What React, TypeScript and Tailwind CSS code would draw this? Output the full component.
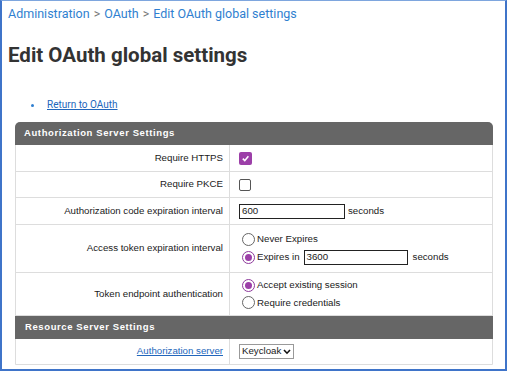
import React from "react";

function Radio({ checked }: { checked?: boolean }) {
  return (
    <span
      className={`inline-block w-[13px] h-[13px] rounded-full border shrink-0 ${
        checked ? "border-[#8e3a9c] bg-white" : "border-[#666] bg-white"
      } relative`}
    >
      {checked && (
        <span className="absolute left-[2px] top-[2px] w-[7px] h-[7px] rounded-full bg-[#9c3fa8]" />
      )}
    </span>
  );
}

export default function App() {
  return (
    <div className="w-[507px] h-[375px] bg-white relative overflow-hidden" style={{ fontFamily: "Roboto, 'Liberation Sans', sans-serif" }}>
      <div className="w-[507px] h-[371px] border-l-2 border-r-2 border-b-2 border-t border-[#3f74c9] border-t-[#7ea6de]">
        <div className="pl-[6px] pt-[5px] text-[12.5px] leading-[16px] text-[#2f7fd0] flex items-center gap-[4px]">
          <span>Administration</span>
          <span className="text-[#777]">&gt;</span>
          <span>OAuth</span>
          <span className="text-[#777]">&gt;</span>
          <span>Edit OAuth global settings</span>
        </div>
        <h1 className="pl-[6px] mt-[20px] text-[20.5px] leading-[26px] font-bold text-[#333]">
          Edit OAuth global settings
        </h1>
        <ul className="mt-[31px] pl-[29px] text-[10px] leading-[12px]" style={{ fontFamily: "Roboto, sans-serif" }}>
          <li className="flex items-center gap-[13px]">
            <span className="w-[3px] h-[3px] rounded-full bg-[#2f7fd0]" />
            <a className="text-[#2266bb] underline">Return to OAuth</a>
          </li>
        </ul>
        <div
          className="ml-[13px] mt-[11px] w-[478px] border border-[#ddd] rounded-t-[6px] text-[9.7px] text-[#1a1a1a]"
          style={{ fontFamily: "'Liberation Sans', Arial, sans-serif" }}
        >
          <div className="h-[23px] bg-[#666] rounded-t-[5px] -mt-px -mx-px flex items-center pl-[9px] text-white font-bold tracking-[0.6px] text-[9.5px]">
            Authorization Server Settings
          </div>
          <div className="flex h-[27px] border-b border-[#ddd]">
            <div className="w-[214px] border-r border-[#ddd] flex items-center justify-end pr-[6px]">Require HTTPS</div>
            <div className="flex items-center pl-[9px]">
              <span className="w-[13px] h-[13px] rounded-[2px] bg-[#9c3fa8] flex items-center justify-center">
                <svg width="9" height="9" viewBox="0 0 10 10">
                  <path d="M2 5.2 L4.2 7.4 L8.2 2.6" stroke="white" strokeWidth="1.8" fill="none" />
                </svg>
              </span>
            </div>
          </div>
          <div className="flex h-[26px] border-b border-[#ddd]">
            <div className="w-[214px] border-r border-[#ddd] flex items-center justify-end pr-[6px]">Require PKCE</div>
            <div className="flex items-center pl-[9px]">
              <span className="w-[12px] h-[12px] rounded-[2px] border border-[#555] bg-white" />
            </div>
          </div>
          <div className="flex h-[27px] border-b border-[#ddd]">
            <div className="w-[214px] border-r border-[#ddd] flex items-center justify-end pr-[6px]">Authorization code expiration interval</div>
            <div className="flex items-center pl-[9px] gap-[3px]">
              <span className="w-[106px] h-[15px] border border-[#222] flex items-center pl-[2px] leading-none">600</span>
              <span>seconds</span>
            </div>
          </div>
          <div className="flex h-[48px] border-b border-[#ddd]">
            <div className="w-[214px] border-r border-[#ddd] flex items-center justify-end pr-[6px]">Access token expiration interval</div>
            <div className="flex flex-col justify-center pl-[12px] gap-[3px]">
              <div className="flex items-center gap-[2px]">
                <Radio />
                <span>Never Expires</span>
              </div>
              <div className="flex items-center gap-[2px]">
                <Radio checked />
                <span>Expires in</span>
                <span className="ml-[2px] w-[104px] h-[15px] border border-[#222] flex items-center pl-[2px] leading-none">3600</span>
                <span className="ml-[3px]">seconds</span>
              </div>
            </div>
          </div>
          <div className="flex h-[43px] border-b border-[#ddd]">
            <div className="w-[214px] border-r border-[#ddd] flex items-center justify-end pr-[6px]">Token endpoint authentication</div>
            <div className="flex flex-col justify-center pl-[12px] gap-[3px]">
              <div className="flex items-center gap-[2px]">
                <Radio checked />
                <span>Accept existing session</span>
              </div>
              <div className="flex items-center gap-[2px]">
                <Radio />
                <span>Require credentials</span>
              </div>
            </div>
          </div>
          <div className="h-[23px] bg-[#666] -mx-px flex items-center pl-[10px] text-white font-bold tracking-[0.6px] text-[9.5px]">
            Resource Server Settings
          </div>
          <div className="flex h-[25px]">
            <div className="w-[214px] border-r border-[#ddd] flex items-center justify-end pr-[6px]">
              <a className="text-[#2266bb] underline">Authorization server</a>
            </div>
            <div className="flex items-center pl-[9px]">
              <span className="h-[15px] border border-[#999] flex items-center px-[2px] gap-[2px]">
                Keycloak
                <svg width="8" height="6" viewBox="0 0 8 6">
                  <path d="M1 1 L4 4.2 L7 1" stroke="#111" strokeWidth="1.6" fill="none" />
                </svg>
              </span>
            </div>
          </div>
        </div>
      </div>
    </div>
  );
}
